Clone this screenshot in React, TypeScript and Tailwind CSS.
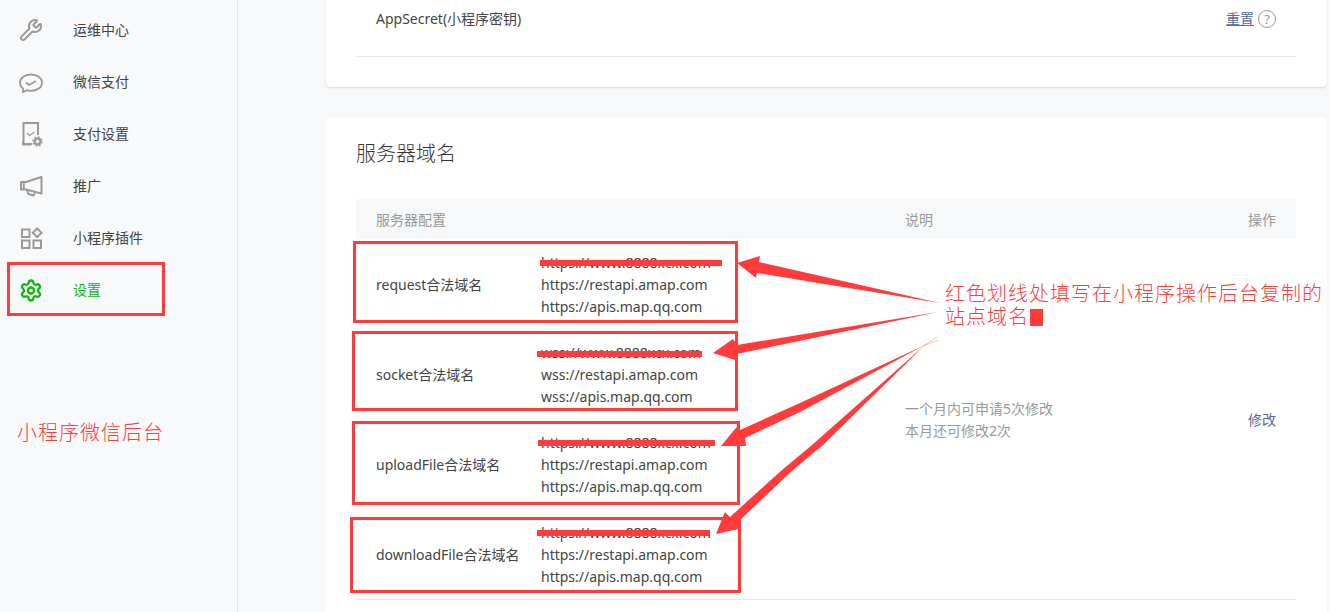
import type { ReactNode } from 'react'
import { Settings, Wrench } from 'lucide-react'

const FONT = "font-['Noto_Sans','Noto_Sans_CJK_SC',sans-serif]"
const CJK = "font-['Noto_Sans_CJK_SC',sans-serif]"

function ChatIcon() {
  return (
    <svg width="24" height="24" viewBox="0 0 24 24" fill="none" stroke="#9a9a9a" strokeWidth="1.800">
      <path d="M4 18.500c-1.900-1.500-3-3.600-3-5.800C1 8 5.900 4.500 12 4.500S23 8 23 12.700 18.100 20.900 12 20.900c-1.600 0-3.100-.200-4.500-.700L4 22.200z" strokeLinejoin="round" />
      <path d="M7 12.500l3 2.500 7-4" strokeWidth="1.800" />
    </svg>
  )
}

function PayConfigIcon() {
  return (
    <svg width="24" height="26" viewBox="0 0 24 26" fill="none" stroke="#9a9a9a">
      <path d="M13 23H4.500V2h14.500v12" strokeWidth="2" />
      <path d="M4 20.500v3h8" strokeWidth="2" />
      <path d="M8 12l2.500 2.500 5-3.500" strokeWidth="1.300" />
      <circle cx="18.500" cy="20.500" r="3" strokeWidth="2.400" />
      <circle cx="18.500" cy="20.500" r="4.600" strokeWidth="1.400" strokeDasharray="1.800 1.800" />
    </svg>
  )
}

function MegaphoneIcon() {
  return (
    <svg width="24" height="24" viewBox="0 0 24 24" fill="none" stroke="#9a9a9a" strokeWidth="2" strokeLinejoin="round">
      <path d="M2 8h5l15.500-5v16.500L7 15.500H2z" />
      <path d="M4.800 8v7.500" />
      <path d="M8 16l1.300 4 5.500 1.500 1-3" />
    </svg>
  )
}

function PluginIcon() {
  return (
    <svg width="24" height="24" viewBox="0 0 24 24" fill="none" stroke="#9a9a9a" strokeWidth="2">
      <rect x="3" y="3.500" width="7.500" height="7.500" />
      <rect x="3" y="14.500" width="7.500" height="7.500" />
      <rect x="14.500" y="14.500" width="7.500" height="7.500" />
      <path d="M18.200 2.500l4.300 4.300-4.300 4.300-4.300-4.300z" />
    </svg>
  )
}

const navItems: { label: string; icon: ReactNode; active?: boolean }[] = [
  { label: '运维中心', icon: <Wrench size={24} strokeWidth={2} color="#9a9a9a" /> },
  { label: '微信支付', icon: <ChatIcon /> },
  { label: '支付设置', icon: <PayConfigIcon /> },
  { label: '推广', icon: <MegaphoneIcon /> },
  { label: '小程序插件', icon: <PluginIcon /> },
  { label: '设置', icon: <Settings size={25} strokeWidth={2.3} color="#09bb07" />, active: true },
]

const domainRows = [
  { name: 'request合法域名', scheme: 'https', first: 'https://www.8888xcx.com' },
  { name: 'socket合法域名', scheme: 'wss', first: 'wss://www.8888xcx.com' },
  { name: 'uploadFile合法域名', scheme: 'https', first: 'https://www.8888xcx.com' },
  { name: 'downloadFile合法域名', scheme: 'https', first: 'https://www.8888xcx.com' },
]

function Sidebar() {
  return (
    <aside className="w-[238px] shrink-0 border-r border-[#e7e7eb] bg-[#f8f9fb] pt-[4px]">
      {navItems.map((item) => (
        <div key={item.label} className="flex h-[52px] items-center pl-[19px]">
          <span className="mr-[30px] flex h-[26px] w-[24px] items-center justify-center">{item.icon}</span>
          <span className={`pb-[2px] text-[14px] ${item.active ? 'text-[#09bb07]' : 'text-[#444444]'}`}>{item.label}</span>
        </div>
      ))}
    </aside>
  )
}

function DomainTable() {
  return (
    <div className="border-b border-[#e7e7eb] text-[14px] leading-[22px]">
      <div className="flex h-[40px] items-center bg-[#f6f8f9] px-[20px] pt-[2px] text-[#9a9a9a]">
        <span className="w-[529px]">服务器配置</span>
        <span>说明</span>
        <span className="ml-auto">操作</span>
      </div>
      <div className="flex h-[360px] pt-[1px]">
        <div className="w-[529px] shrink-0">
          {domainRows.map((row) => (
            <div key={row.name} className="flex h-[90px] items-center pl-[20px] text-[#444444]">
              <span className="w-[165px] shrink-0 whitespace-nowrap">{row.name}</span>
              <div>
                <p>{row.first}</p>
                <p>{row.scheme}://restapi.amap.com</p>
                <p>{row.scheme}://apis.map.qq.com</p>
              </div>
            </div>
          ))}
        </div>
        <div className="flex flex-1 items-center justify-between px-[20px]">
          <div className="text-[#9a9a9a]">
            <p>一个月内可申请5次修改</p>
            <p>本月还可修改2次</p>
          </div>
          <span className="text-[#576b95]">修改</span>
        </div>
      </div>
    </div>
  )
}

function Main() {
  return (
    <main className="min-w-0 flex-1 pl-[88px] pr-[3px]">
      <section className="rounded-b-[5px] bg-white pb-[30px] pl-[30px] pr-[31px] shadow-[0_1px_2px_rgba(150,150,150,0.3)]">
        <div className="flex h-[57px] justify-between border-b border-[#e7e7eb] px-[20px] pt-[8px] text-[14px] leading-[22px]">
          <span className="text-[#444444]">AppSecret(小程序密钥)</span>
          <span className="flex h-[22px] items-center gap-[4px]">
            <span className="text-[#576b95] underline">重置</span>
            <span className="flex h-[18px] w-[18px] items-center justify-center rounded-full border border-[#9a9a9a] text-[13px] text-[#9a9a9a]">
              ?
            </span>
          </span>
        </div>
      </section>
      <section className="mt-[30px] rounded-t-[5px] bg-white pb-[30px] pl-[30px] pr-[31px] pt-[23px]">
        <h2 className="mb-[31px] text-[20px] font-light leading-[28px] text-[#353535]">服务器域名</h2>
        <DomainTable />
      </section>
    </main>
  )
}

const redBoxes = [
  'left-[7px] top-[262px] h-[54px] w-[158px]',
  'left-[353px] top-[241px] h-[82px] w-[385px]',
  'left-[352px] top-[331px] h-[80px] w-[386px]',
  'left-[352px] top-[421px] h-[84px] w-[388px]',
  'left-[350px] top-[517px] h-[76px] w-[391px]',
]

const strikes = [
  'left-[540px] top-[260px] w-[182px]',
  'left-[537px] top-[351px] w-[165px]',
  'left-[538px] top-[440px] w-[177px]',
  'left-[537px] top-[530px] w-[173px]',
]

// red markup drawn over the screenshot
function Annotations() {
  return (
    <div className={`pointer-events-none absolute inset-0 text-[#ff3b3b] ${CJK}`}>
      {redBoxes.map((box) => (
        <div key={box} className={`absolute border-[3px] border-[#ff3b3b] ${box}`} />
      ))}
      {strikes.map((strike) => (
        <div key={strike} className={`absolute h-[6px] bg-[#ff3b3b] ${strike}`} />
      ))}
      <svg className="absolute inset-0" width="1330" height="612" fill="#ff3b3b">
        <polygon points="737,263 760,256 759,262 940,303 757,273 756,278" />
        <polygon points="713,353 733,339 737,345 938,312 737,354 735,360" />
        <polygon points="721,446 740,423 740,430 800,403 925,345 800,412 745,438 746,446" />
        <polygon points="716,534 725,512 730,517 782,470 812,445 925,345 823,445 793,470 738,522 739,529" />
        <path d="M923 346L937 337M923 346L938 340" stroke="#ff3b3b" strokeOpacity="0.35" fill="none" />
      </svg>
      <p className="absolute left-[945px] top-[281px] w-[385px] text-[20px] font-light leading-[23px] tracking-[1px]">
        红色划线处填写在小程序操作后台复制的
        <br />
        站点域名
      </p>
      <div className="absolute left-[1030px] top-[309px] h-[17px] w-[13px] bg-[#ff3b3b]" />
      <p className="absolute left-[17px] top-[419px] text-[20px] font-light leading-[26px] tracking-[1px]">
        小程序微信后台
      </p>
    </div>
  )
}

export default function App() {
  return (
    <div className={`relative flex h-[612px] w-[1330px] overflow-hidden bg-[#f6f8f9] ${FONT}`}>
      <Sidebar />
      <Main />
      <Annotations />
    </div>
  )
}
